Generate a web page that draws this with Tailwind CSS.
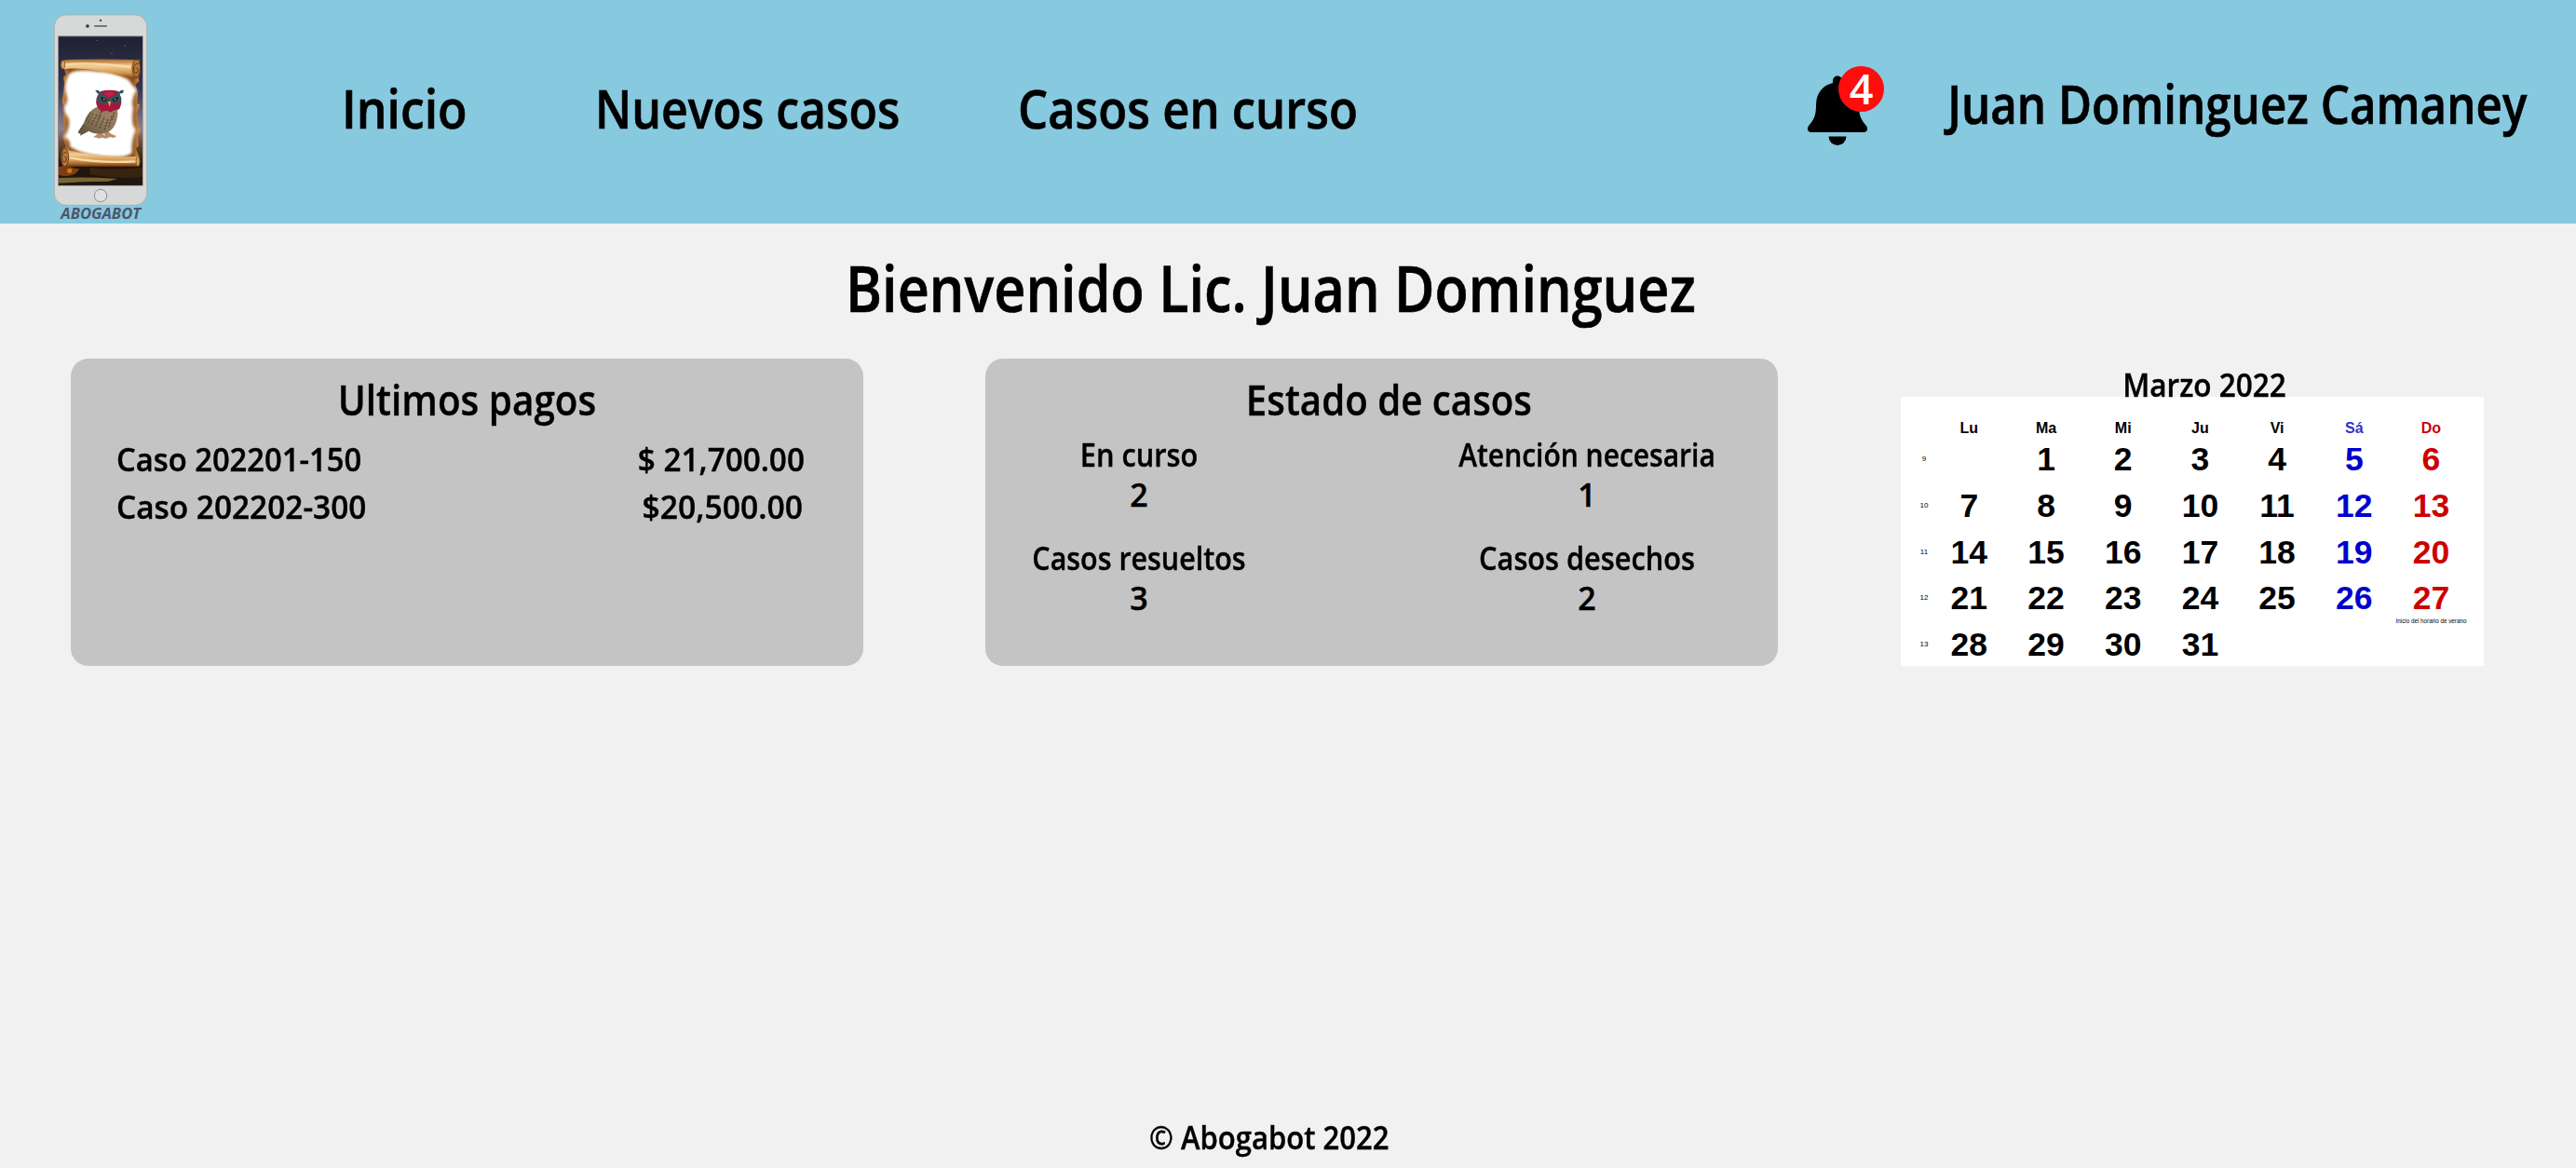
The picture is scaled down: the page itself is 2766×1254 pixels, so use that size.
<!DOCTYPE html>
<html lang="es">
<head>
<meta charset="utf-8">
<title>Abogabot</title>
<script src="https://cdn.jsdelivr.net/npm/@tailwindcss/browser@4"></script>
</head>
<body class="flex h-[1254px] w-[2766px] flex-col overflow-hidden bg-[#f1f1f1] font-['Open_Sans',sans-serif] font-semibold text-black whitespace-nowrap">

<header class="flex h-[240px] shrink-0 bg-[#87c9df] pl-10">
  <!-- Logo -->
  <svg class="h-[240px] w-[140px] shrink-0" viewBox="0 0 420 720">
    <defs>
      <linearGradient id="sky" x1="0" y1="0" x2="0" y2="1">
        <stop offset="0" stop-color="#1e2133"/><stop offset=".35" stop-color="#35354f"/><stop offset=".62" stop-color="#8f7f90"/><stop offset=".72" stop-color="#6a4a30"/><stop offset=".86" stop-color="#24170f"/><stop offset="1" stop-color="#2c2414"/>
      </linearGradient>
      <linearGradient id="roll" x1="0" y1="0" x2="0" y2="1">
        <stop offset="0" stop-color="#a8692c"/><stop offset=".35" stop-color="#f3cf95"/><stop offset=".7" stop-color="#d29550"/><stop offset="1" stop-color="#7a3d0c"/>
      </linearGradient>
      <linearGradient id="paper" x1="0" y1="0" x2="1" y2="0">
        <stop offset="0" stop-color="#c98a45"/><stop offset=".1" stop-color="#8a4a12"/><stop offset=".5" stop-color="#b87935"/><stop offset=".9" stop-color="#8a4a12"/><stop offset="1" stop-color="#d19a5a"/>
      </linearGradient>
      <linearGradient id="body" x1="0" y1="1" x2="1" y2="0">
        <stop offset="0" stop-color="#5c4c3a"/><stop offset=".5" stop-color="#8b7658"/><stop offset="1" stop-color="#a08360"/>
      </linearGradient>
      <filter id="soft" x="-10%" y="-10%" width="120%" height="120%"><feGaussianBlur stdDeviation="5"/></filter>
    </defs>
    <rect x="55" y="48" width="298" height="613" rx="38" fill="#d6d9d8" stroke="#aaa59c" stroke-width="2"/>
    <circle cx="204" cy="66" r="3.5" fill="#444"/>
    <circle cx="162" cy="84" r="5.5" fill="#333"/>
    <rect x="183" y="82" width="42" height="4" rx="2" fill="#555"/>
    <rect x="66" y="115" width="275" height="484" fill="#8b8d8e"/>
    <rect x="69" y="118" width="270" height="478" fill="url(#sky)"/>
    <path d="M69 536H339V596H69Z" fill="#20150f"/>
    <path d="M69 538q20-8 38 0t28 4q-4 16-24 22t-42 0Z" fill="#7c3d12"/>
    <circle cx="104" cy="550" r="8" fill="#d3741c"/>
    <path d="M69 573q90-4 190 3l-30 8q-80 0-160 6Z" fill="#766631"/>
    <path d="M170 540q70 10 169 0v30q-80 8-169-8Z" fill="#38230f"/>
    <circle cx="192" cy="130" r="1.5" fill="#99a"/><circle cx="282" cy="147" r="1.5" fill="#aab"/><circle cx="240" cy="172" r="1.5" fill="#99a"/>
    <!-- Parchment -->
    <path d="M84 210 L322 232 L328 262 L316 272 L324 300 L322 332 L330 338 L322 362 L326 405 L332 420 L324 440 L326 470 L318 478 L330 510 L84 510 L92 470 L82 440 L90 420 L84 380 L90 350 L80 330 L88 270 L84 250 L92 240Z" fill="url(#paper)"/>
    <path d="M104 244Q120 226 190 236Q240 236 290 260Q304 280 314 290Q296 320 304 350Q296 400 312 420Q298 450 300 490Q280 506 200 496Q150 494 110 470Q112 450 94 440Q112 410 106 380Q90 360 92 345Q108 330 98 300Q90 280 104 244Z" fill="#fff" stroke="#fff" stroke-width="10" filter="url(#soft)"/>
    <path d="M80 194 Q180 188 330 193 L328 250 Q310 258 290 250 Q180 214 80 222 Q72 208 80 194Z" fill="url(#roll)"/>
    <path d="M90 208Q180 200 300 216" fill="none" stroke="#f7dba9" stroke-width="7"/>
    <ellipse cx="319" cy="220" rx="13" ry="28" fill="#b57a3c" stroke="#5f3210" stroke-width="2.5"/>
    <path d="M325 206q-14-4-14 16t12 12q6-10-3-16" fill="none" stroke="#5f3210" stroke-width="3"/>
    <ellipse cx="83" cy="208" rx="6" ry="13" fill="#d8a562" stroke="#6b3a12" stroke-width="2"/>
    <path d="M84 478 Q96 470 104 484 Q200 510 326 504 Q336 520 328 536 L84 536 Q68 510 84 478Z" fill="url(#roll)"/>
    <path d="M104 508Q200 526 318 520" fill="none" stroke="#f7dba9" stroke-width="7"/>
    <ellipse cx="89" cy="507" rx="12" ry="29" fill="#b57a3c" stroke="#5f3210" stroke-width="2.5"/>
    <path d="M94 492q-14-4-14 16t12 12q6-10-3-16" fill="none" stroke="#5f3210" stroke-width="3"/>
    <ellipse cx="324" cy="520" rx="6" ry="15" fill="#d8a562" stroke="#6b3a12" stroke-width="2"/>
    <!-- Owl -->
    <path d="M180 442q12-8 18-14l14 2q0 8 22 10l-12 6-14-3-10 3-6-3Z M214 428l16-4q4 8 26 14l-10 6-12-3-8 4-6-6Z" fill="#b98a64"/>
    <path d="M196 343Q162 356 150 396L132 424Q130 432 140 430L138 437Q156 428 166 422Q186 434 214 430Q240 426 252 398Q262 372 258 350Q230 336 196 343Z" fill="url(#body)"/>
    <path d="M180 366l-16 30M192 370l-20 34M204 374l-18 36M216 380l-16 34M228 384l-12 34M240 374l-10 36M172 362l-14 28M206 360l-10 22M150 404l-12 18M248 362l-8 26" stroke="#3f3329" stroke-width="3" stroke-dasharray="6 4" fill="none"/>
    <path d="M186 362l-14 24M212 366l-12 26M224 370l-8 26M236 362l-6 22" stroke="#b59a76" stroke-width="2.5" stroke-dasharray="4 5" fill="none"/>
    <path d="M204 294Q232 286 262 294L270 316Q274 334 264 352L246 356L236 362L226 356L206 360L196 348Q184 330 194 308Z" fill="#a3183b"/>
    <path d="M187 291Q196 288 200 294L206 300Q222 308 232 320Q244 306 260 300L266 294Q270 288 279 291L276 300Q268 300 264 304L271 316Q270 330 258 333Q244 336 238 326L232 332L226 326Q218 338 206 334Q194 330 193 318L200 304Q192 302 187 291Z" fill="#2f5560"/>
    <path d="M206 312l18 8q-2 9-10 7t-8-15Z M260 312l-18 8q2 9 10 7t8-15Z" fill="#16110f"/>
    <path d="M211 317l9 4-6 3Z M255 317l-9 4 6 3Z" fill="#e0b03a"/>
    <path d="M214 298Q232 292 252 298L244 306 232 314 220 306Z" fill="#c01f47"/>
    <path d="M227 327h11l-5 17Z" fill="#c9a06c"/>
    <circle cx="204" cy="630" r="20" fill="#dfe1e0" stroke="#807d78" stroke-width="2.5"/>
    <text x="76" y="705" textLength="257" lengthAdjust="spacingAndGlyphs" class="fill-[#4c566b] text-[49px] font-bold italic">ABOGABOT</text>
  </svg>

  <nav class="flex items-center pb-[9px] pl-[187px] text-[58px] leading-none [-webkit-text-stroke:.7px_black]">
    <a class="w-[272px] origin-left scale-x-[.891]">Inicio</a>
    <a class="w-[454px] origin-left scale-x-[.862]">Nuevos casos</a>
    <a class="w-[380px] origin-left scale-x-[.875]">Casos en curso</a>
  </nav>

  <div class="relative mt-[81px] ml-[467px] h-[75px] w-[67px] shrink-0 self-start">
    <svg class="block h-[75px] w-[66px]" viewBox="0 0 66 75">
      <path d="M33 .5a5 5 0 0 0-5 5V8C16 11 10 20 10 32 10 44 7 48 2.500 53.500 -.5 57.500 1 61 5 61H61C65 61 66.500 57.500 63.500 53.500 59 48 56 44 56 32 56 20 50 11 38 8V5.500a5 5 0 0 0-5-5Z"/>
      <path d="M23.500 65.500H42.500A9.500 9.500 0 0 1 23.500 65.500Z"/>
    </svg>
    <div class="absolute -top-[10px] left-[34px] flex size-[49px] items-center justify-center rounded-full bg-[#ff0d0d] pb-[3px] text-[45px] leading-none text-white">4</div>
  </div>

  <div class="flex w-[670px] shrink-0 origin-left scale-x-[.85] items-center pb-[19px] pl-[99px] text-[58px] leading-none [-webkit-text-stroke:.7px_black]">Juan Dominguez Camaney</div>
</header>

<main class="flex flex-1 flex-col">
  <h1 class="ml-[908px] w-[1040px] origin-left scale-x-[.8725] pt-[35px] pb-[2px] text-[68px] leading-[68px] [-webkit-text-stroke:.7px_black]">Bienvenido Lic. Juan Dominguez</h1>

  <div class="flex pt-10 pl-[76px]">
    <section class="h-[330px] w-[851px] rounded-[19px] bg-[#c4c4c4] pt-[18px] [-webkit-text-stroke:.4px_black]">
      <h2 class="scale-x-[.879] text-center text-[46px] leading-[50px]">Ultimos pagos</h2>
      <div class="mt-[15px] flex justify-between pr-[63px] pl-[49px] text-[34px] leading-[51px]">
        <div><p class="origin-left scale-x-[.963]">Caso 202201-150</p><p class="origin-left scale-x-[.982]">Caso 202202-300</p></div>
        <div class="text-right"><p class="origin-right scale-x-[.979]">$ 21,700.00</p><p class="origin-right scale-x-[.99] pr-0.5">$20,500.00</p></div>
      </div>
    </section>

    <section class="ml-[131px] h-[330px] w-[851px] rounded-[19px] bg-[#c4c4c4] pt-[18px] [-webkit-text-stroke:.4px_black]">
      <h2 class="scale-x-[.8745] pl-[18px] text-center text-[46px] leading-[50px]">Estado de casos</h2>
      <div class="mt-[14px] flex justify-between pr-[65px] pl-[50px] text-center text-[34px] leading-[43px]">
        <div class="w-[230px]">
          <p class="scale-x-[.904]">En curso</p><p>2</p>
          <p class="-mx-5 mt-[25px] scale-x-[.895]">Casos resueltos</p><p>3</p>
        </div>
        <div class="w-[280px]">
          <p class="-mx-5 scale-x-[.882]">Atención necesaria</p><p>1</p>
          <p class="mt-[25px] scale-x-[.903]">Casos desechos</p><p>2</p>
        </div>
      </div>
    </section>

    <section class="ml-[132px] w-[626px]">
      <h2 class="relative z-10 h-[41px] scale-x-[.928] pt-[8px] pl-[28px] text-center text-[34px] leading-[40px] [-webkit-text-stroke:.4px_black]">Marzo 2022</h2>
      <div class="h-[289px] bg-white pt-6 pr-[15px] font-['Liberation_Sans',sans-serif] font-bold">
        <div class="grid grid-cols-[32px_repeat(7,82.700px)] text-center text-[16px] leading-5">
          <span></span><span>Lu</span><span>Ma</span><span>Mi</span><span>Ju</span><span>Vi</span><span class="text-[#3333cc]">Sá</span><span class="text-[#cc0000]">Do</span>
        </div>
        <div id="days" class="grid auto-rows-[49.800px] grid-cols-[32px_repeat(7,82.700px)] text-center text-[35.500px] leading-[46px]"></div>
      </div>
    </section>
  </div>

  <footer class="mt-auto ml-[1234px] w-[300px] origin-left scale-x-[.913] pb-[8px] text-[34px] leading-[50px] [-webkit-text-stroke:.4px_black]">© Abogabot 2022</footer>
</main>

<script>
  const days = document.getElementById('days');
  let html = '';
  for (let w = 0; w < 5; w++) {
    html += `<span class="pl-[18px] text-[8px] leading-[45px] font-normal">${w + 9}</span>`;
    for (let d = 0; d < 7; d++) {
      const n = w * 7 + d;
      const color = d === 5 ? 'text-[#0000cc]' : d === 6 ? 'text-[#cc0000]' : '';
      const note = n === 27 ? '<small class="absolute -inset-x-2 top-[44px] text-center text-[6.300px] leading-[8px] font-normal text-black">Inicio del horario de verano</small>' : '';
      html += `<span class="relative ${color}">${n > 0 && n < 32 ? n : ''}${note}</span>`;
    }
  }
  days.innerHTML = html;
</script>
</body>
</html>
